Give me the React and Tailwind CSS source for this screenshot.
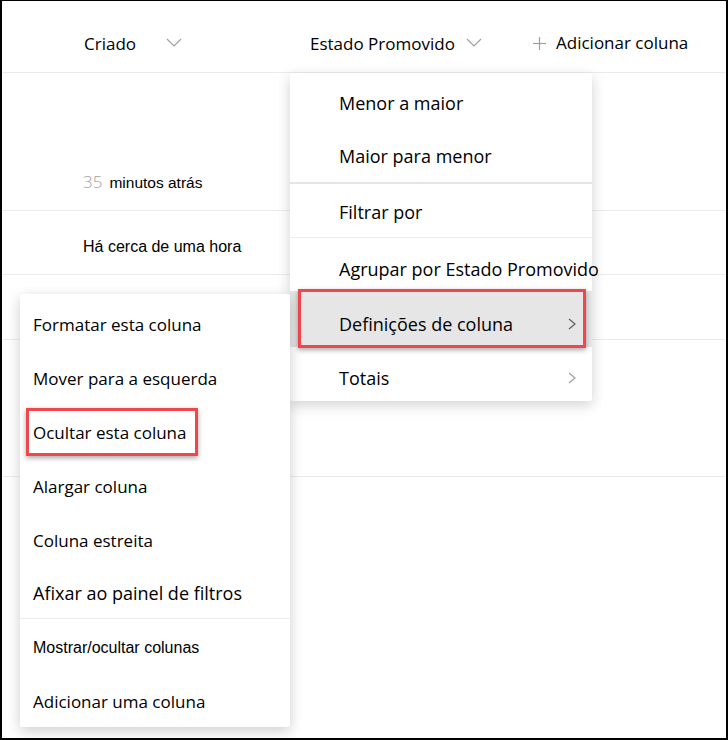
import React from "react";

const ui = { fontFamily: '"Open Sans", "Noto Sans", sans-serif' };
const arial = { fontFamily: '"Liberation Sans", Arial, sans-serif' };

const ChevronDown = ({ className }) => (
  <svg className={className} width="16" height="9" viewBox="0 0 16 9" fill="none">
    <polyline points="1,1 8,8 15,1" stroke="#a19f9d" strokeWidth="1.2" />
  </svg>
);

const ChevronRight = ({ color = "#8a8886" }) => (
  <svg width="8" height="12" viewBox="0 0 8 12" fill="none">
    <polyline points="1,1 7,6 1,11" stroke={color} strokeWidth="1.2" />
  </svg>
);

const Plus = () => (
  <svg width="13" height="13" viewBox="0 0 13 13" fill="none">
    <line x1="6.5" y1="0" x2="6.5" y2="13" stroke="#a19f9d" strokeWidth="1.2" />
    <line x1="0" y1="6.5" x2="13" y2="6.5" stroke="#a19f9d" strokeWidth="1.2" />
  </svg>
);

const RedBox = ({ className }) => (
  <div
    className={
      "absolute border-[3px] border-[#f0474c] shadow-[0_2px_5px_rgba(0,0,0,0.35)] pointer-events-none " +
      className
    }
  />
);

const MenuItem = ({ children, className = "", chevron, chevronColor }) => (
  <div className={"flex items-center pl-[49px] pr-[16px] text-[18px] text-black " + className}>
    <span className="flex-1 whitespace-nowrap">{children}</span>
    {chevron && <ChevronRight color={chevronColor} />}
  </div>
);

const SubItem = ({ children, className = "", style = ui }) => (
  <div className={"flex items-center pl-[13px] text-black whitespace-nowrap " + className} style={style}>
    {children}
  </div>
);

export default function App() {
  return (
    <div className="relative w-[728px] h-[740px] bg-white overflow-hidden" style={ui}>
      {/* header */}
      <div className="flex items-center h-[73px] border-b border-[#edebe9] pl-[84px] pt-[16px] text-[17px] text-black">
        <div className="flex items-center w-[226px]">
          <span>Criado</span>
          <ChevronDown className="ml-[30px] -mt-[4px]" />
        </div>
        <div className="flex items-center w-[223px]">
          <span>Estado Promovido</span>
          <ChevronDown className="ml-[11px] -mt-[4px]" />
        </div>
        <div className="flex items-center gap-[10px] -mt-[2px]">
          <Plus />
          <span>Adicionar coluna</span>
        </div>
      </div>

      {/* rows */}
      <div className="h-[138px] border-b border-[#edebe9] pl-[83px] pt-[96px] flex items-baseline" style={arial}>
        <span className="text-[17px] text-[#a19f9d] font-light mr-[7px]" style={ui}>35</span>
        <span className="text-[15.5px] text-black">minutos atrás</span>
      </div>
      <div className="h-[64px] border-b border-[#edebe9] pl-[83px] pt-[24px] text-[16px] text-black" style={arial}>
        Há cerca de uma hora
      </div>
      <div className="h-[65px] border-b border-[#edebe9]" />
      <div className="h-[137px] border-b border-[#edebe9]" />

      {/* column menu */}
      <div className="absolute left-[290px] top-[73px] w-[302px] h-[328px] bg-white rounded-[2px] shadow-[0_4px_14px_rgba(0,0,0,0.18)] pt-[3px]">
        <MenuItem className="h-[54px]">Menor a maior</MenuItem>
        <MenuItem className="h-[52px]">Maior para menor</MenuItem>
        <div className="h-[2px] bg-[#e5e5e5]" />
        <MenuItem className="h-[53px] pt-[4px]">Filtrar por</MenuItem>
        <div className="h-px bg-[#edebe9]" />
        <MenuItem className="h-[53px] pt-[10px]">Agrupar por Estado Promovido</MenuItem>
        <MenuItem className="h-[56px] pt-[10px] bg-[#e6e6e6]" chevron chevronColor="#605e5c">
          Definições de coluna
        </MenuItem>
        <MenuItem className="h-[54px] pt-[8px]" chevron chevronColor="#a19f9d">
          Totais
        </MenuItem>
        <RedBox className="left-[8px] top-[216px] w-[288px] h-[59px]" />
      </div>

      {/* submenu */}
      <div className="absolute left-[20px] top-[294px] w-[270px] h-[433px] bg-white rounded-[2px] shadow-[0_4px_14px_rgba(0,0,0,0.2)] pt-[4px]">
        <SubItem className="h-[54px] text-[17px]">Formatar esta coluna</SubItem>
        <SubItem className="h-[54px] text-[17px]">Mover para a esquerda</SubItem>
        <SubItem className="h-[54px] text-[17px]">Ocultar esta coluna</SubItem>
        <SubItem className="h-[54px] text-[17px]">Alargar coluna</SubItem>
        <SubItem className="h-[54px] text-[17px]">Coluna estreita</SubItem>
        <SubItem className="h-[50px] text-[18px]">Afixar ao painel de filtros</SubItem>
        <div className="h-px bg-[#edebe9]" />
        <SubItem className="h-[58px] text-[16px]" style={arial}>Mostrar/ocultar colunas</SubItem>
        <SubItem className="h-[50px] text-[17px]">Adicionar uma coluna</SubItem>
        <RedBox className="left-[6px] top-[114px] w-[172px] h-[48px]" />
      </div>

      {/* screenshot frame */}
      <div className="absolute inset-0 border-l-2 border-t border-r-2 border-b-2 border-black pointer-events-none" />
    </div>
  );
}
